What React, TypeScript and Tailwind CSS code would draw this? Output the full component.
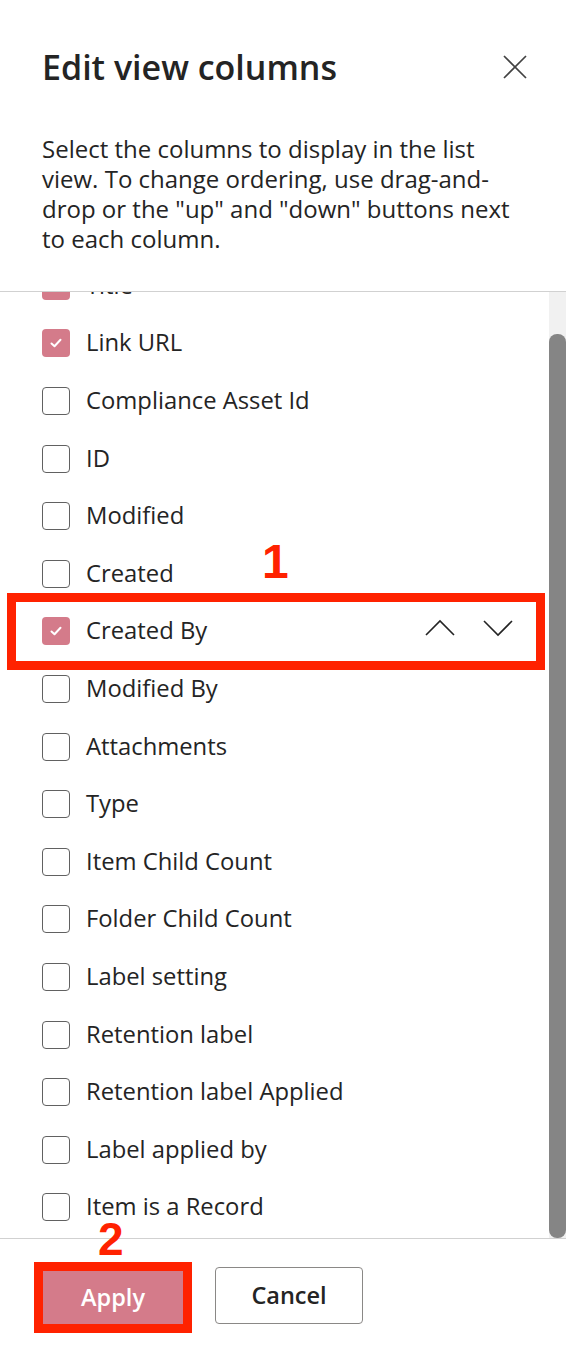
import React from 'react';

const columns = [
  { name: 'Title', checked: true },
  { name: 'Link URL', checked: true },
  { name: 'Compliance Asset Id', checked: false },
  { name: 'ID', checked: false },
  { name: 'Modified', checked: false },
  { name: 'Created', checked: false },
  { name: 'Created By', checked: true, active: true },
  { name: 'Modified By', checked: false },
  { name: 'Attachments', checked: false },
  { name: 'Type', checked: false },
  { name: 'Item Child Count', checked: false },
  { name: 'Folder Child Count', checked: false },
  { name: 'Label setting', checked: false },
  { name: 'Retention label', checked: false },
  { name: 'Retention label Applied', checked: false },
  { name: 'Label applied by', checked: false },
  { name: 'Item is a Record', checked: false },
  { name: 'Scope Id', checked: false },
];

function Checkbox({ checked }: { checked: boolean }) {
  if (checked) {
    return (
      <div className="w-[28px] h-[28px] rounded-[4px] bg-[#d47b8a] flex items-center justify-center shrink-0">
        <svg width="14" height="14" viewBox="0 0 14 14" fill="none">
          <path d="M2.5 7.5 L5.5 10.2 L11.5 3.8" stroke="white" strokeWidth="2" strokeLinecap="round" strokeLinejoin="round" />
        </svg>
      </div>
    );
  }
  return <div className="w-[28px] h-[28px] rounded-[4px] border border-[#616161] bg-white shrink-0" />;
}

function Chevron({ up }: { up?: boolean }) {
  return (
    <svg width="30" height="18" viewBox="0 0 30 18" fill="none">
      <path
        d={up ? 'M1 16 L15 2 L29 16' : 'M1 2 L15 16 L29 2'}
        stroke="#242424"
        strokeWidth="1.6"
        strokeLinejoin="miter"
      />
    </svg>
  );
}

export default function App() {
  return (
    <div
      className="relative w-[566px] h-[1358px] bg-white flex flex-col overflow-hidden text-[#242424]"
      style={{ fontFamily: '"Open Sans", "Noto Sans", sans-serif' }}
    >
      {/* header */}
      <div className="h-[291px] shrink-0 pl-[42px] pr-[39px] pt-[45px]">
        <div className="flex items-center justify-between">
          <h1 className="text-[34px] leading-[44px] font-semibold">Edit view columns</h1>
          <button className="w-[24px] h-[24px] flex items-center justify-center">
            <svg width="24" height="24" viewBox="0 0 24 24" fill="none">
              <path d="M1 1 L23 23 M23 1 L1 23" stroke="#424242" strokeWidth="1.7" />
            </svg>
          </button>
        </div>
        <p className="mt-[45px] text-[24px] leading-[30px] whitespace-nowrap">
          Select the columns to display in the list
          <br />
          view. To change ordering, use drag-and-
          <br />
          drop or the "up" and "down" buttons next
          <br />
          to each column.
        </p>
      </div>

      {/* column list */}
      <div className="h-[948px] shrink-0 border-y border-[#d1d1d1] flex">
        <div className="flex-1 overflow-hidden">
          <div className="mt-[-35px]">
            {columns.map((c) => (
              <div key={c.name} className="h-[57.6px] flex items-center pl-[42px] pr-[36px] gap-[16px]">
                <Checkbox checked={c.checked} />
                <span className="text-[23.8px] leading-none">{c.name}</span>
                {c.active && (
                  <div className="ml-auto flex items-center gap-[28px] mt-[-6px]">
                    <Chevron up />
                    <Chevron />
                  </div>
                )}
              </div>
            ))}
          </div>
        </div>
        <div className="w-[17px] bg-[#f1f1f1] flex flex-col">
          <div className="mt-[42px] flex-1 bg-[#858585] rounded-[8px]" />
        </div>
      </div>

      {/* footer */}
      <div className="flex-1 flex items-start pl-[34px] pt-[23px] gap-[23px]">
        <div className="border-[9px] border-[#ff2200]">
          <button className="w-[140px] h-[53px] bg-[#d47b8a] text-white text-[23.5px] font-semibold">Apply</button>
        </div>
        <button className="mt-[5px] w-[148px] h-[57px] border border-[#8a8886] rounded-[4px] bg-white text-[23.5px] font-semibold text-[#242424]">
          Cancel
        </button>
      </div>

      {/* annotations */}
      <div className="absolute left-[7px] top-[593px] w-[538px] h-[77px] border-[9px] border-[#ff2200] pointer-events-none" />
      <div
        className="absolute left-[262px] top-[534px] text-[48px] leading-[56px] font-bold text-[#ff2200]"
        style={{ fontFamily: '"Liberation Sans", Arial, sans-serif' }}
      >
        1
      </div>
      <div
        className="absolute left-[98px] top-[1212px] text-[46px] leading-[54px] font-bold text-[#ff2200]"
        style={{ fontFamily: '"Liberation Sans", Arial, sans-serif' }}
      >
        2
      </div>
    </div>
  );
}
